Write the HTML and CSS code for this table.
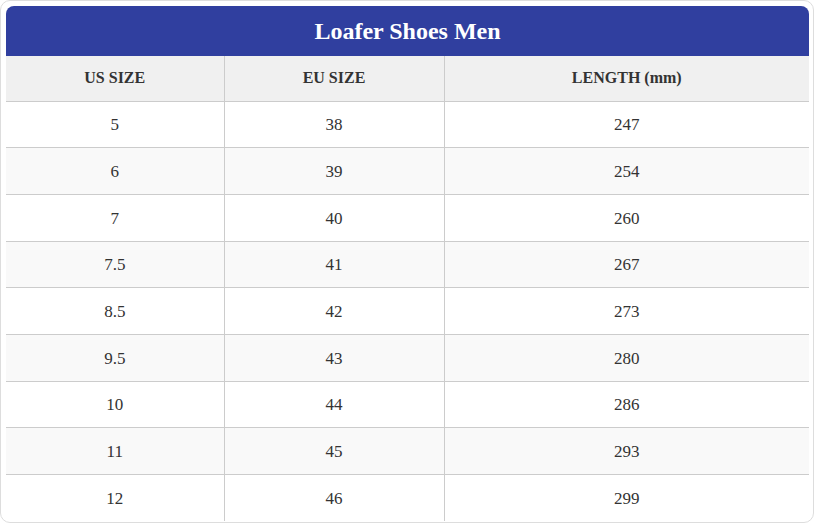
FILE: index.html
```html
<!DOCTYPE html>
<html>
<head>
<meta charset="utf-8">
<link rel="stylesheet" href="styles.css">
</head>
<body>
<div class="wrap">
  <table class="chart">
    <colgroup>
      <col class="c1"><col class="c2"><col class="c3">
    </colgroup>
    <caption class="title">Loafer Shoes Men</caption>
    <thead>
      <tr><th>US SIZE</th><th>EU SIZE</th><th>LENGTH (mm)</th></tr>
    </thead>
    <tbody>
      <tr><td>5</td><td>38</td><td>247</td></tr>
      <tr><td>6</td><td>39</td><td>254</td></tr>
      <tr><td>7</td><td>40</td><td>260</td></tr>
      <tr><td>7.5</td><td>41</td><td>267</td></tr>
      <tr><td>8.5</td><td>42</td><td>273</td></tr>
      <tr><td>9.5</td><td>43</td><td>280</td></tr>
      <tr><td>10</td><td>44</td><td>286</td></tr>
      <tr><td>11</td><td>45</td><td>293</td></tr>
      <tr><td>12</td><td>46</td><td>299</td></tr>
    </tbody>
  </table>
</div>
</body>
</html>
```
FILE: styles.css
```css
html, body {
  margin: 0;
  padding: 0;
  background: #ffffff;
}
.wrap {
  box-sizing: border-box;
  width: 814px;
  height: 523px;
  padding: 5px;
  border: 1px solid #dddddd;
  border-radius: 10px;
  font-family: "Liberation Serif", "Times New Roman", serif;
  color: #333333;
}
.chart {
  width: 803px;
  border-collapse: collapse;
  table-layout: fixed;
}
.c1 { width: 218px; }
.c2 { width: 220px; }
.c3 { width: 365px; }
.title {
  height: 50px;
  line-height: 50px;
  background: #303f9f;
  color: #ffffff;
  font-weight: bold;
  font-size: 24px;
  border-radius: 8px 8px 0 0;
  text-align: center;
}
th, td {
  text-align: center;
  padding: 0;
  border-bottom: 1px solid #cccccc;
  border-right: 1px solid #cccccc;
}
th:last-child, td:last-child {
  border-right: none;
}
thead tr {
  height: 45px;
  background: #f0f0f0;
}
th {
  font-size: 16px;
  font-weight: bold;
  color: #333333;
}
tbody tr {
  height: 46.7px;
}
tbody tr:nth-child(even) {
  background: #f9f9f9;
}
tbody tr:last-child td {
  border-bottom: none;
}
td {
  padding-top: 2px;
  font-size: 17px;
  color: #333333;
}
```
